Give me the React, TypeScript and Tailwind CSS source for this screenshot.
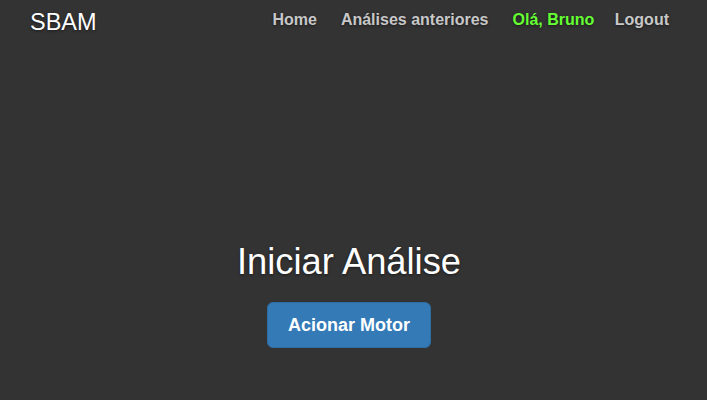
import React from "react";

const shadow = "[text-shadow:0_1px_3px_rgba(0,0,0,0.5)]";

export default function App() {
  return (
    <div className={`h-[400px] w-full bg-[#333333] text-white font-['Liberation_Sans',Arial,sans-serif] flex flex-col ${shadow}`}>
      <header className="flex items-start justify-between pl-[30px] pr-[38px] pt-[10px]">
        <div className="text-[23.5px] leading-[24px] text-white">SBAM</div>
        <nav className="flex items-center text-[16px] leading-[20px] font-bold">
          <span className="text-[rgba(255,255,255,0.75)]">Home</span>
          <span className="ml-[24px] text-[rgba(255,255,255,0.75)]">Análises anteriores</span>
          <span className="ml-[24px] text-[#66ff33]">Olá, Bruno</span>
          <span className="ml-[20.5px] text-[rgba(255,255,255,0.75)]">Logout</span>
        </nav>
      </header>
      <main className="flex flex-col items-center pt-[208px] pr-[9px]">
        <h1 className="text-[36.3px] leading-[40px] font-normal">Iniciar Análise</h1>
        <button className="mt-[20px] w-[164px] h-[46px] rounded-[6px] bg-[#337ab7] border border-[#2e6da4] text-[18px] font-bold text-white">
          Acionar Motor
        </button>
      </main>
    </div>
  );
}
